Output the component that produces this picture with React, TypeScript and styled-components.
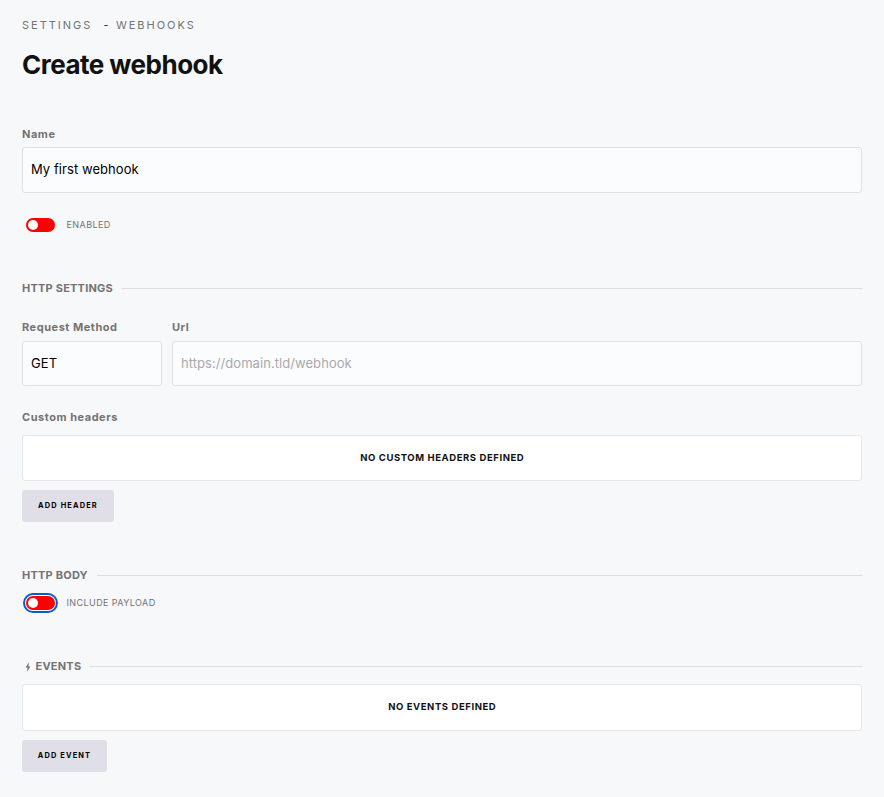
import React, { useState } from 'react';
import styled, { createGlobalStyle } from 'styled-components';

const GlobalStyle = createGlobalStyle`
  *, *::before, *::after { box-sizing: border-box; }
  body {
    margin: 0;
    background: #f7f8fa;
    color: #111;
    font-family: Inter, "Liberation Sans", sans-serif;
  }
`;

const Page = styled.main`
  min-height: 797px;
  padding: 17px 22px 24px;
`;

const Breadcrumb = styled.nav`
  display: flex;
  height: 16px;
  color: #737373;
  font-size: 11px;
  line-height: 16px;
  letter-spacing: 2px;
  white-space: pre;
`;

const Crumb = styled.span``;

const Separator = styled.span`
  width: 12.5px;
  margin-left: 11px;
  color: #333;
`;

const Title = styled.h1`
  height: 32px;
  margin: 16px 0 47px;
  font-size: 26px;
  line-height: 32px;
  font-weight: 700;
  letter-spacing: -0.51px;
`;

const Label = styled.label<{ $gap?: number }>`
  display: block;
  height: 12px;
  margin-bottom: ${(p) => p.$gap ?? 7}px;
  color: #737373;
  font-size: 11px;
  line-height: 12px;
  font-weight: 700;
  letter-spacing: 0.53px;
`;

const Input = styled.input<{ $height?: number }>`
  display: block;
  width: 100%;
  height: ${(p) => p.$height ?? 46}px;
  padding: 0 8px ${(p) => (p.$height ? 1 : 2)}px;
  border: 1px solid #dfe0e2;
  border-radius: 3px;
  outline: none;
  background: #fbfcfe;
  color: #000;
  font: 400 13px Inter, "Liberation Sans", sans-serif;
  letter-spacing: 0.06px;
  &::placeholder { color: #a9a9ab; opacity: 1; }
`;

const ToggleRow = styled.div<{ $top: number; $bottom: number }>`
  display: flex;
  align-items: center;
  height: 14px;
  margin: ${(p) => p.$top}px 0 ${(p) => p.$bottom}px 4px;
`;

const Switch = styled.button<{ $on: boolean; $ring?: boolean }>`
  display: flex;
  align-items: center;
  justify-content: ${(p) => (p.$on ? 'flex-end' : 'flex-start')};
  width: 29px;
  height: 14px;
  padding: 0 2px;
  border: 0;
  border-radius: 7px;
  background: #f00;
  outline: ${(p) => (p.$ring ? '2px solid #0b5cce' : 'none')};
  outline-offset: 1px;
  box-shadow: ${(p) => (p.$ring ? '0 0 0 1px #fff' : 'none')};
`;

const Knob = styled.span`
  width: 10px;
  height: 10px;
  border-radius: 50%;
  background: #fff;
`;

const ToggleText = styled.span`
  margin-left: 11.5px;
  color: #737373;
  font-size: 9px;
  line-height: 14px;
  letter-spacing: 0.42px;
`;

const SectionTitle = styled.h2<{ $bottom: number }>`
  display: flex;
  align-items: center;
  height: 14px;
  margin: 0 0 ${(p) => p.$bottom}px;
  color: #737373;
  font-size: 11px;
  line-height: 14px;
  font-weight: 700;
  letter-spacing: 0.22px;
  &::after {
    content: '';
    flex: 1;
    height: 1px;
    margin: 1px 0 0 9px;
    background: #dcddde;
  }
`;

const BoltIcon = styled.svg`
  width: 6px;
  height: 10px;
  margin: 1px 5px 0 2.5px;
  fill: currentColor;
`;

const RequestRow = styled.div`
  display: grid;
  grid-template-columns: 140px 1fr;
  gap: 10px;
  margin-bottom: 25px;
`;

const EmptyBox = styled.div<{ $height?: number }>`
  display: flex;
  align-items: center;
  justify-content: center;
  height: ${(p) => p.$height ?? 46}px;
  margin-bottom: 9px;
  padding: 0 0 2px 0.5px;
  border: 1px solid #e7e6e6;
  border-radius: 3px;
  background: #fff;
  font-size: 9.5px;
  font-weight: 700;
  letter-spacing: 0.58px;
`;

const AddButton = styled.button<{ $width: number }>`
  display: block;
  width: ${(p) => p.$width}px;
  height: 32px;
  padding: 0 0 1px;
  border: 0;
  border-radius: 3px;
  background: #e0dee7;
  color: #000;
  font: 700 7.4px Inter, "Liberation Sans", sans-serif;
  letter-spacing: 1.16px;
`;

const HeadersBlock = styled.section`
  margin-bottom: 46px;
`;

function Toggle({ text, top, bottom, ring }: { text: string; top: number; bottom: number; ring?: boolean }) {
  const [on, setOn] = useState(false);
  return (
    <ToggleRow $top={top} $bottom={bottom}>
      <Switch type="button" role="switch" aria-checked={on} aria-label={text} $on={on} $ring={ring} onClick={() => setOn(!on)}>
        <Knob />
      </Switch>
      <ToggleText>{text}</ToggleText>
    </ToggleRow>
  );
}

export default function App() {
  return (
    <>
      <GlobalStyle />
      <Page>
        <Breadcrumb>
          <Crumb>SETTINGS</Crumb>
          <Separator>-</Separator>
          <Crumb>WEBHOOKS</Crumb>
        </Breadcrumb>
        <Title>Create webhook</Title>

        <Label htmlFor="name">Name</Label>
        <Input id="name" defaultValue="My first webhook" />
        <Toggle text="ENABLED" top={25} bottom={49} />

        <SectionTitle $bottom={26}>HTTP SETTINGS</SectionTitle>
        <RequestRow>
          <div>
            <Label htmlFor="method" $gap={8}>Request Method</Label>
            <Input id="method" defaultValue="GET" $height={45} />
          </div>
          <div>
            <Label htmlFor="url" $gap={8}>Url</Label>
            <Input id="url" placeholder="https://domain.tld/webhook" $height={45} />
          </div>
        </RequestRow>
        <HeadersBlock>
          <Label as="div" $gap={12}>Custom headers</Label>
          <EmptyBox>NO CUSTOM HEADERS DEFINED</EmptyBox>
          <AddButton type="button" $width={92}>ADD HEADER</AddButton>
        </HeadersBlock>

        <SectionTitle $bottom={0}>HTTP BODY</SectionTitle>
        <Toggle text="INCLUDE PAYLOAD" top={14} bottom={49} ring />

        <SectionTitle $bottom={11}>
          <BoltIcon viewBox="0 0 6 10" aria-hidden="true">
            <path d="M4 0.3 0.5 5.6h2.1L2 9.7l3.5-5.3H3.4z" />
          </BoltIcon>
          EVENTS
        </SectionTitle>
        <EmptyBox $height={47}>NO EVENTS DEFINED</EmptyBox>
        <AddButton type="button" $width={85}>ADD EVENT</AddButton>
      </Page>
    </>
  );
}
